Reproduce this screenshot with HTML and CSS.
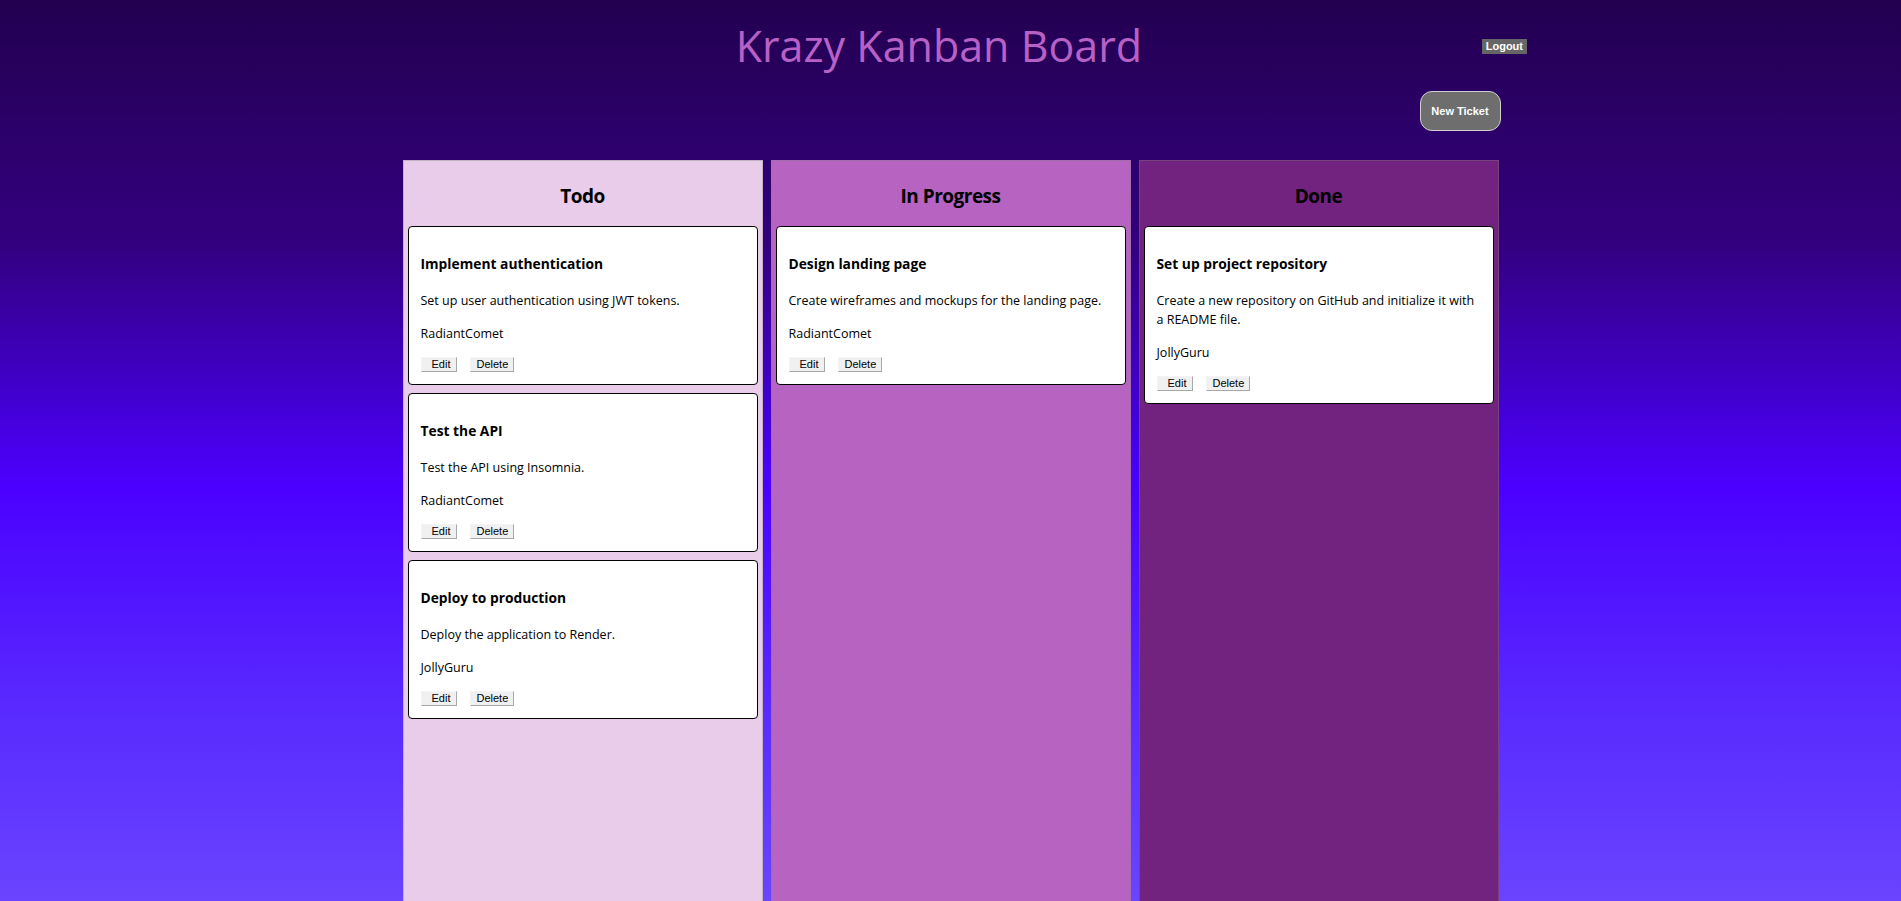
FILE: index.html
```html
<!DOCTYPE html>
<html lang="en">
<head>
<meta charset="utf-8">
<title>Krazy Kanban Board</title>
<link rel="stylesheet" href="styles.css">
</head>
<body>
  <header class="nav">
    <h1 class="nav-title">Krazy Kanban Board</h1>
    <button class="logout-btn">Logout</button>
  </header>
  <div class="actions">
    <button class="new-ticket-btn">New Ticket</button>
  </div>
  <main class="board">
    <section class="swim-lane lane-todo">
      <h2 class="lane-title">Todo</h2>
      <div class="ticket">
        <h3 class="ticket-title">Implement authentication</h3>
        <p class="ticket-text">Set up user authentication using JWT tokens.</p>
        <p class="ticket-text">RadiantComet</p>
        <div class="ticket-actions"><button class="btn btn-edit">Edit</button><button class="btn">Delete</button></div>
      </div>
      <div class="ticket">
        <h3 class="ticket-title">Test the API</h3>
        <p class="ticket-text">Test the API using Insomnia.</p>
        <p class="ticket-text">RadiantComet</p>
        <div class="ticket-actions"><button class="btn btn-edit">Edit</button><button class="btn">Delete</button></div>
      </div>
      <div class="ticket">
        <h3 class="ticket-title">Deploy to production</h3>
        <p class="ticket-text">Deploy the application to Render.</p>
        <p class="ticket-text">JollyGuru</p>
        <div class="ticket-actions"><button class="btn btn-edit">Edit</button><button class="btn">Delete</button></div>
      </div>
    </section>
    <section class="swim-lane lane-progress">
      <h2 class="lane-title">In Progress</h2>
      <div class="ticket">
        <h3 class="ticket-title">Design landing page</h3>
        <p class="ticket-text">Create wireframes and mockups for the landing page.</p>
        <p class="ticket-text">RadiantComet</p>
        <div class="ticket-actions"><button class="btn btn-edit">Edit</button><button class="btn">Delete</button></div>
      </div>
    </section>
    <section class="swim-lane lane-done">
      <h2 class="lane-title">Done</h2>
      <div class="ticket">
        <h3 class="ticket-title">Set up project repository</h3>
        <p class="ticket-text">Create a new repository on GitHub and initialize it with a README file.</p>
        <p class="ticket-text">JollyGuru</p>
        <div class="ticket-actions"><button class="btn btn-edit">Edit</button><button class="btn">Delete</button></div>
      </div>
    </section>
  </main>
</body>
</html>
```

FILE: styles.css
```css
* {
  box-sizing: border-box;
}

html, body {
  margin: 0;
  height: 100%;
}

body {
  display: flex;
  flex-direction: column;
  overflow: hidden;
  font-family: "Open Sans", "Noto Sans", sans-serif;
  font-size: 12.5px;
  color: #000;
  background: linear-gradient(180deg, #230050 0%, #33007f 27%, #4b00ff 54%, #5a2cff 80%, #6a44ff 100%);
}

.nav {
  display: flex;
  align-items: flex-start;
  padding: 0 374px 0 396px;
}

.nav-title {
  flex: 1;
  margin: 17px 0 0;
  text-align: center;
  font-size: 43px;
  line-height: 58px;
  font-weight: 400;
  color: #b761c6;
}

.logout-btn {
  margin-top: 39px;
  height: 15px;
  padding: 0 4px;
  border: none;
  background: #666;
  color: #fff;
  font-family: "Liberation Sans", Arial, sans-serif;
  font-size: 11px;
  font-weight: 700;
  line-height: 15px;
}

.actions {
  width: 1100px;
  margin: 16px auto 29px;
  display: flex;
  justify-content: flex-end;
}

.new-ticket-btn {
  width: 81px;
  height: 40px;
  padding: 0;
  border: 1px solid #d0d0d0;
  border-radius: 12px;
  background: #6e6e6e;
  color: #fff;
  font-family: "Liberation Sans", Arial, sans-serif;
  font-size: 11px;
  font-weight: 700;
}

.board {
  flex: 1;
  width: 1096px;
  margin: 0 auto;
  display: flex;
  gap: 8px;
  min-height: 0;
}

.swim-lane {
  width: 360px;
  padding: 0 4px;
  border: 1px solid rgba(128, 128, 128, 0.35);
  border-bottom: none;
}

.lane-todo {
  background: #e8cce9;
}

.lane-progress {
  background: #b663c2;
}

.lane-done {
  background: #72237f;
}

.lane-title {
  margin: 21px 0 16px;
  text-align: center;
  font-size: 19px;
  letter-spacing: -0.5px;
  line-height: 28px;
  font-weight: 700;
}

.ticket {
  background: #fff;
  border: 1px solid #000;
  border-radius: 4px;
  padding: 10px 10px 10px 12px;
  margin-bottom: 8px;
}

.ticket-title {
  margin: 16px 0;
  font-size: 13.8px;
  line-height: 22px;
  font-weight: 700;
}

.ticket-text {
  margin: 14px 0;
  line-height: 19px;
}

.ticket-actions {
  display: flex;
  gap: 13px;
  margin-bottom: 2px;
}

.btn {
  height: 15px;
  padding: 0 5px;
  border: 1px solid;
  border-color: #f4f4f4 #a8a8a8 #a8a8a8 #f4f4f4;
  background: #f0f0f0;
  color: #000;
  font-family: "Liberation Sans", Arial, sans-serif;
  font-size: 11px;
  line-height: 13px;
}

.btn-edit {
  padding-left: 10px;
  padding-right: 6px;
}
```
